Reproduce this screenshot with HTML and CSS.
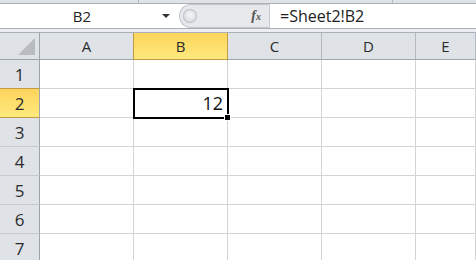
FILE: index.html
```html
<!DOCTYPE html>
<html lang="en">
<head>
    <meta charset="UTF-8">
    <title>Sheet1</title>
    <link rel="stylesheet" href="styles.css">
</head>
<body>
    <div class="ribbon-edge">
        <span class="tick tick-left"></span>
        <span class="tick tick-right"></span>
    </div>

    <div class="formula-bar">
        <div class="name-box">
            <span class="name-value">B2</span>
            <span class="name-arrow"></span>
        </div>
        <div class="bar-tools">
            <span class="grip"></span>
            <span class="fx">f<sub>x</sub></span>
        </div>
        <div class="formula-input">=Sheet2!B2</div>
    </div>

    <div class="bar-gap"></div>

    <div class="sheet">
        <div class="corner"><span class="corner-tri"></span></div>
        <div class="col-head">A</div>
        <div class="col-head active">B</div>
        <div class="col-head">C</div>
        <div class="col-head">D</div>
        <div class="col-head">E</div>

        <div class="row-head">1</div>
        <div class="cell"></div><div class="cell"></div><div class="cell"></div><div class="cell"></div><div class="cell"></div>

        <div class="row-head active">2</div>
        <div class="cell"></div>
        <div class="cell selected">12<span class="fill-handle"></span></div>
        <div class="cell"></div><div class="cell"></div><div class="cell"></div>

        <div class="row-head">3</div>
        <div class="cell"></div><div class="cell"></div><div class="cell"></div><div class="cell"></div><div class="cell"></div>

        <div class="row-head">4</div>
        <div class="cell"></div><div class="cell"></div><div class="cell"></div><div class="cell"></div><div class="cell"></div>

        <div class="row-head">5</div>
        <div class="cell"></div><div class="cell"></div><div class="cell"></div><div class="cell"></div><div class="cell"></div>

        <div class="row-head">6</div>
        <div class="cell"></div><div class="cell"></div><div class="cell"></div><div class="cell"></div><div class="cell"></div>

        <div class="row-head">7</div>
        <div class="cell"></div><div class="cell"></div><div class="cell"></div><div class="cell"></div><div class="cell"></div>
    </div>
</body>
</html>
```

FILE: styles.css
```css
body {
    margin: 0;
    width: 476px;
    height: 260px;
    overflow: hidden;
    background-color: #fff;
    font-family: 'Open Sans', 'Noto Sans', sans-serif;
    color: #222;
}

.ribbon-edge {
    position: relative;
    height: 3px;
    background-color: #dfe3e8;
    border-bottom: 1px solid #a9b0b8;
}

.tick {
    position: absolute;
    top: 0;
    width: 1px;
    height: 3px;
    background-color: #b4bac1;
}

.tick-left {
    left: 138px;
}

.tick-right {
    left: 392px;
}

.formula-bar {
    display: flex;
    height: 24px;
    border-bottom: 1px solid #a9b0b8;
    background-color: #fff;
}

.name-box {
    width: 179px;
    display: flex;
    align-items: center;
}

.name-value {
    flex: 1;
    text-align: center;
    font-size: 15px;
    padding-left: 2px;
}

.name-arrow {
    width: 0;
    height: 0;
    margin-right: 9px;
    border-left: 4px solid transparent;
    border-right: 4px solid transparent;
    border-top: 4px solid #333;
}

.bar-tools {
    width: 91px;
    display: flex;
    align-items: center;
    background-color: #e6e8eb;
    border: 1px solid #c0c5cb;
    border-right-color: #c8ccd1;
    border-radius: 12px 0 0 12px;
    box-sizing: border-box;
}

.grip {
    width: 14px;
    height: 14px;
    margin-left: 3px;
    border-radius: 50%;
    background: radial-gradient(circle at 50% 40%, #f4f5f7 0, #dfe2e5 55%, #cdd1d6 100%);
    box-shadow: inset 0 0 0 1px #bcc1c7;
}

.fx {
    margin-left: auto;
    margin-right: 8px;
    font-family: 'Liberation Serif', serif;
    font-style: italic;
    font-weight: bold;
    font-size: 14px;
    color: #555;
}

.fx sub {
    font-size: 10px;
    vertical-align: 0;
}

.formula-input {
    flex: 1;
    display: flex;
    align-items: center;
    padding-left: 10px;
    font-size: 16px;
}

.bar-gap {
    height: 3px;
    background-color: #eceef1;
    border-bottom: 1px solid #a9b0b8;
}

.sheet {
    display: grid;
    grid-template-columns: 40px 94px 94px 94px 94px 1fr;
    grid-template-rows: 27px repeat(7, 29px);
}

.corner,
.col-head,
.row-head,
.cell {
    box-sizing: border-box;
}

.corner {
    position: relative;
    background-color: #dfe3e8;
    border-right: 1px solid #9ea4ab;
    border-bottom: 1px solid #9ea4ab;
}

.corner-tri {
    position: absolute;
    right: 4px;
    bottom: 4px;
    width: 0;
    height: 0;
    border-left: 17px solid transparent;
    border-bottom: 17px solid #b8bcc1;
}

.col-head {
    display: flex;
    align-items: center;
    justify-content: center;
    font-size: 15px;
    color: #2b2b2b;
    background-color: #dfe3e8;
    border-right: 1px solid #b5bac0;
    border-bottom: 1px solid #9ea4ab;
}

.row-head {
    display: flex;
    align-items: center;
    justify-content: center;
    font-size: 17px;
    color: #2b2b2b;
    background-color: #dfe3e8;
    border-right: 1px solid #9ea4ab;
    border-bottom: 1px solid #c5cace;
}

.col-head.active {
    background: linear-gradient(#fcd45c, #ffe97d);
    border-left: 1px solid #c29a43;
    border-right: 1px solid #c29a43;
    border-bottom: 1px solid #c29a43;
    margin-left: -1px;
}

.row-head.active {
    background: linear-gradient(#fcd45c, #ffe97d);
    border-top: 1px solid #c29a43;
    border-bottom: 1px solid #c29a43;
    margin-top: -1px;
}

.cell {
    border-right: 1px solid #d4d4d4;
    border-bottom: 1px solid #d4d4d4;
}

.cell.selected {
    position: relative;
    display: flex;
    align-items: center;
    justify-content: flex-end;
    padding-right: 4px;
    font-size: 18px;
    color: #111;
    outline: 2px solid #000;
    outline-offset: -1px;
}

.fill-handle {
    position: absolute;
    right: -4px;
    bottom: -4px;
    width: 5px;
    height: 5px;
    background-color: #000;
    border: 1px solid #fff;
}
```
